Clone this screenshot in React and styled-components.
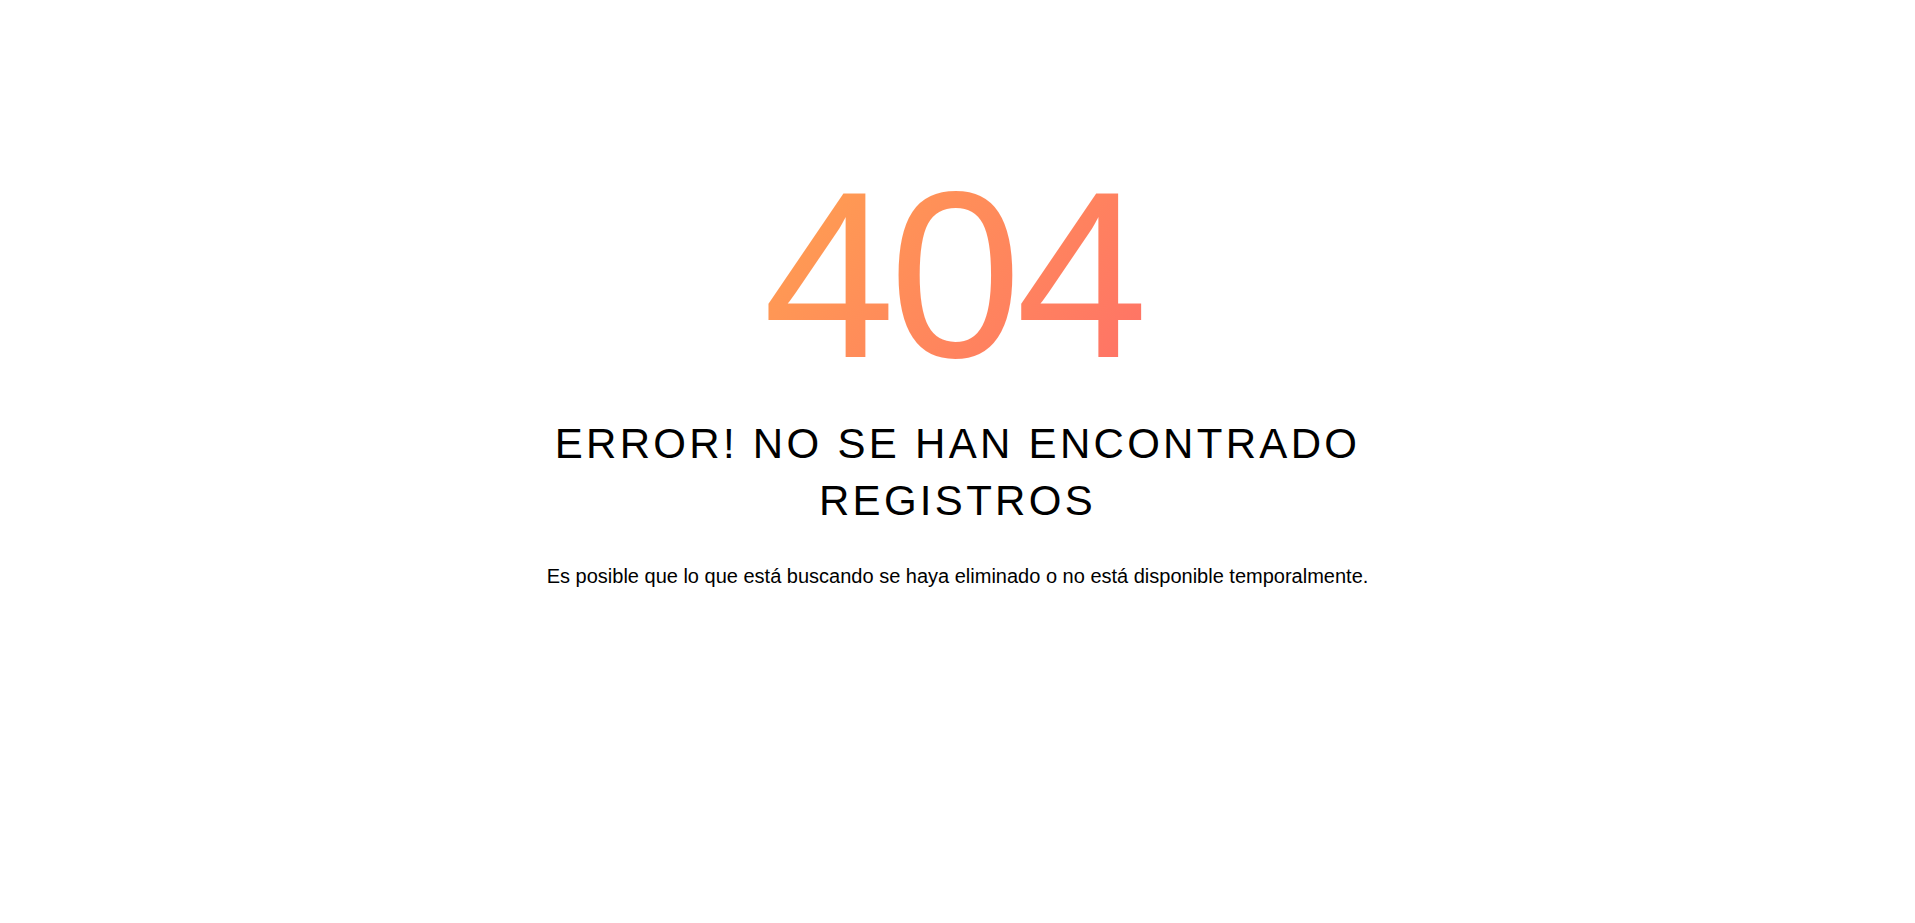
import React from 'react';
import styled, { createGlobalStyle } from 'styled-components';

const GlobalStyle = createGlobalStyle`
  html, body {
    margin: 0;
    padding: 0;
    background: #fff;
    font-family: "Liberation Sans", Arial, sans-serif;
  }
`;

const Page = styled.div`
  min-height: 923px;
  display: flex;
  justify-content: center;
  padding-top: 156px;
  box-sizing: border-box;
`;

const NotFound = styled.div`
  width: 920px;
  display: flex;
  flex-direction: column;
  align-items: center;
  text-align: center;
`;

const Code = styled.h1`
  margin: 0;
  padding-right: 10px;
  font-family: "Liberation Sans", Arial, sans-serif;
  font-size: 238px;
  font-weight: 400;
  line-height: 1;
  letter-spacing: -6px;
  background: linear-gradient(130deg, #ffa34f, #ff6f68);
  -webkit-background-clip: text;
  background-clip: text;
  -webkit-text-fill-color: transparent;
  color: transparent;
`;

const Title = styled.h2`
  margin: 21px 0 0;
  font-size: 42px;
  font-weight: 400;
  line-height: 57px;
  letter-spacing: 3.3px;
  text-transform: uppercase;
  color: #000;
`;

const Message = styled.p`
  margin: 34px 0 0;
  font-size: 20px;
  line-height: 27px;
  color: #000;
`;

export default function App() {
  return (
    <>
      <GlobalStyle />
      <Page>
        <NotFound>
          <Code>404</Code>
          <Title>
            Error! no se han encontrado
            <br />
            registros
          </Title>
          <Message>
            Es posible que lo que está buscando se haya eliminado o no está disponible temporalmente.
          </Message>
        </NotFound>
      </Page>
    </>
  );
}
